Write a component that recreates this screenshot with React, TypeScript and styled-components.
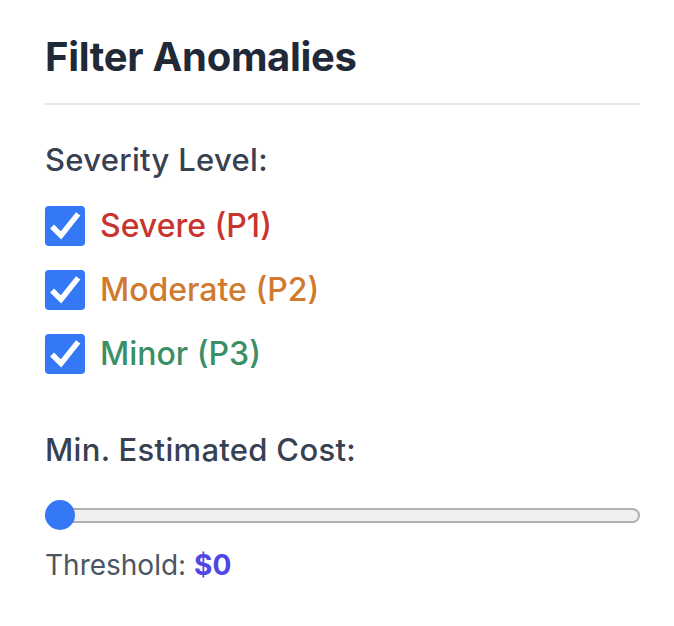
import { useState } from "react";
import styled, { createGlobalStyle } from "styled-components";

const GlobalStyle = createGlobalStyle`
    html, body {
        margin: 0;
        padding: 0;
        background: #fff;
        font-family: Inter, "Liberation Sans", sans-serif;
    }
`;

const Panel = styled.aside`
    width: 595px;
    padding: 33px 34px 40px 45px;
`;

const Title = styled.h2`
    margin: 0;
    padding-bottom: 22px;
    font-size: 40px;
    line-height: 1.21;
    font-weight: 700;
    letter-spacing: -0.3px;
    color: #1f2937;
    border-bottom: 2px solid #e5e7eb;
`;

const Section = styled.section<{ $gap: number }>`
    display: flex;
    flex-direction: column;
    margin-top: ${(p) => p.$gap}px;
`;

const SectionLabel = styled.h3<{ $below: number }>`
    margin: 0 0 ${(p) => p.$below}px;
    font-size: 31px;
    line-height: 1.21;
    font-weight: 500;
    letter-spacing: 0.3px;
    color: #374151;
`;

const Options = styled.ul`
    list-style: none;
    margin: 0;
    padding: 0;
    display: flex;
    flex-direction: column;
    gap: 24px;
`;

const Option = styled.label<{ $color: string }>`
    display: flex;
    align-items: center;
    gap: 15px;
    height: 40px;
    font-size: 32px;
    font-weight: 500;
    color: ${(p) => p.$color};
`;

const Box = styled.span`
    width: 40px;
    height: 40px;
    flex: none;
    border-radius: 4px;
    background: #3478f6;
    display: flex;
`;

const Slider = styled.input`
    -webkit-appearance: none;
    appearance: none;
    width: 100%;
    margin: 0;
    height: 30px;
    background: transparent;

    &::-webkit-slider-runnable-track {
        height: 15px;
        border-radius: 8px;
        background: #efefef;
        box-shadow: inset 0 0 0 2px #b0b0b0;
    }
    &::-webkit-slider-thumb {
        -webkit-appearance: none;
        width: 30px;
        height: 30px;
        border-radius: 50%;
        background: #3478f6;
        margin-top: -7.5px;
        border: none;
    }
`;

const Threshold = styled.p`
    margin: 19px 0 0;
    font-size: 28px;
    line-height: 1.21;
    color: #4b5563;

    strong {
        color: #4f46e5;
        font-weight: 700;
    }
`;

const severities = [
    { label: "Severe (P1)", color: "#c8352f" },
    { label: "Moderate (P2)", color: "#cf7a2f" },
    { label: "Minor (P3)", color: "#3b8f66" },
];

const Check = () => (
    <svg width="40" height="40" viewBox="0 0 40 40" fill="none">
        <path d="M9 22.5l7 7L31.5 10" stroke="#fff" strokeWidth="5.5" strokeLinecap="square" strokeLinejoin="miter" />
    </svg>
);

export default function App() {
    const [cost, setCost] = useState(0);

    return (
        <>
            <GlobalStyle />
            <Panel>
                <Title>Filter Anomalies</Title>
                <Section $gap={36}>
                    <SectionLabel $below={27}>Severity Level:</SectionLabel>
                    <Options>
                        {severities.map((s) => (
                            <li key={s.label}>
                                <Option $color={s.color}>
                                    <Box><Check /></Box>
                                    {s.label}
                                </Option>
                            </li>
                        ))}
                    </Options>
                </Section>
                <Section $gap={57}>
                    <SectionLabel $below={32}>Min. Estimated Cost:</SectionLabel>
                    <Slider type="range" min={0} max={10000} value={cost} onChange={(e) => setCost(Number(e.target.value))} />
                    <Threshold>Threshold: <strong>${cost}</strong></Threshold>
                </Section>
            </Panel>
        </>
    );
}
